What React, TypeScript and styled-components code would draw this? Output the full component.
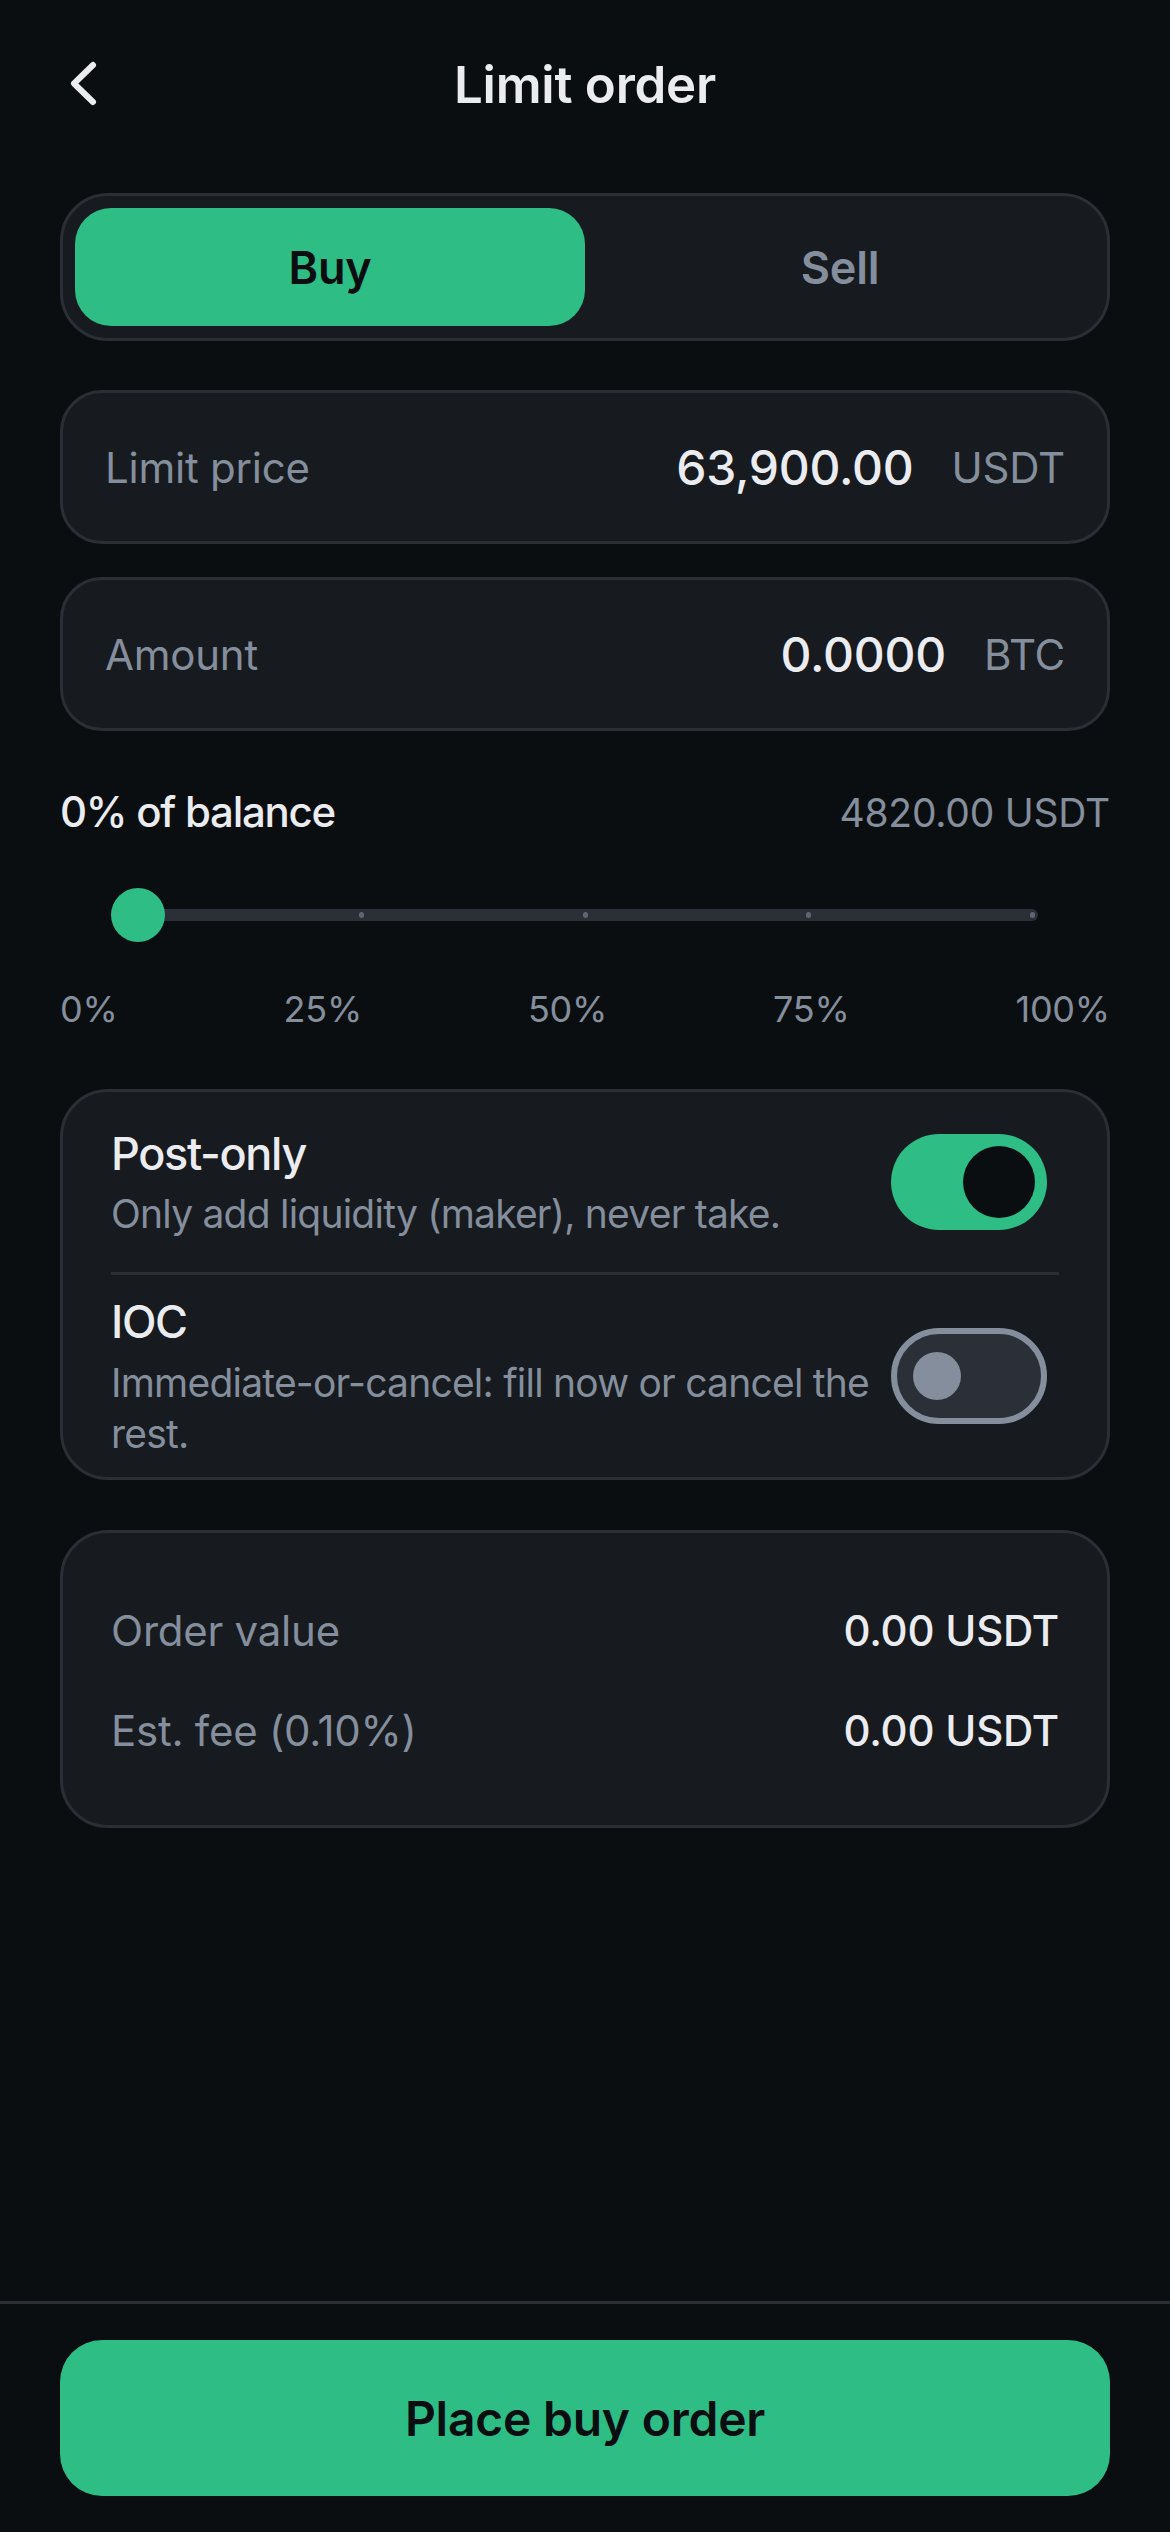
import React, { useState } from 'react';
import styled, { createGlobalStyle } from 'styled-components';

const GlobalStyle = createGlobalStyle`
  * {
    box-sizing: border-box;
  }
  html,
  body {
    margin: 0;
    padding: 0;
    background: #0b0e11;
  }
  body {
    font-family: Inter, 'Noto Sans', sans-serif;
    letter-spacing: -0.015em;
    color: #eaecef;
    -webkit-font-smoothing: antialiased;
  }
  button {
    letter-spacing: inherit;
  }
`;

const Page = styled.div`
  min-height: 100vh;
  display: flex;
  flex-direction: column;
  background: #0b0e11;
`;

const Header = styled.header`
  height: 168px;
  display: grid;
  grid-template-columns: 1fr auto 1fr;
  align-items: center;
  padding: 0 60px;
`;

const BackButton = styled.button`
  width: 48px;
  height: 48px;
  padding: 0;
  border: 0;
  background: none;
  color: #eaecef;
  display: flex;
  cursor: pointer;
`;

const Title = styled.h1`
  margin: 0;
  font-size: 51px;
  font-weight: 600;
  color: #eaecef;
`;

const Content = styled.main`
  flex: 1;
  display: flex;
  flex-direction: column;
  padding: 25px 60px 0;
`;

const Segmented = styled.div`
  display: grid;
  grid-template-columns: 1fr 1fr;
  padding: 12px;
  border: 3px solid #2a2f36;
  border-radius: 48px;
  background: #171a1f;
`;

const SegmentButton = styled.button<{ $active: boolean }>`
  height: 118px;
  border: 0;
  border-radius: 36px;
  font-family: inherit;
  font-size: 45px;
  font-weight: 600;
  cursor: pointer;
  background: ${(p) => (p.$active ? '#2ebd85' : 'transparent')};
  color: ${(p) => (p.$active ? '#0b0e11' : '#848e9c')};
`;

const Fields = styled.div`
  display: flex;
  flex-direction: column;
  gap: 33px;
  margin-top: 49px;
`;

const Field = styled.div`
  display: flex;
  align-items: center;
  height: 154px;
  padding: 0 42px;
  border: 3px solid #2a2f36;
  border-radius: 42px;
  background: #171a1f;
`;

const FieldLabel = styled.span`
  flex: 1;
  font-size: 42px;
  color: #848e9c;
`;

const FieldValue = styled.span`
  font-size: 48px;
  font-weight: 500;
  color: #eaecef;
`;

const FieldUnit = styled.span`
  margin-left: 38px;
  font-size: 42px;
  color: #848e9c;
`;

const BalanceRow = styled.div`
  display: flex;
  justify-content: space-between;
  align-items: baseline;
  margin-top: 54px;
  line-height: 1.3;
`;

const BalanceLabel = styled.span`
  font-size: 42px;
  font-weight: 500;
  letter-spacing: -0.03em;
  color: #eaecef;
`;

const BalanceValue = styled.span`
  font-size: 39px;
  color: #848e9c;
`;

const Slider = styled.div`
  position: relative;
  height: 66px;
  margin: 42px 72px 0;
`;

const Track = styled.div`
  position: absolute;
  left: 0;
  right: 0;
  top: 27px;
  height: 12px;
  border-radius: 6px;
  background: #2b3038;
`;

const Tick = styled.span`
  position: absolute;
  top: 3px;
  width: 5px;
  height: 6px;
  margin-left: -2.5px;
  border-radius: 3px;
  background: #5e6673;
`;

const Thumb = styled.span`
  position: absolute;
  top: 6px;
  width: 54px;
  height: 54px;
  margin-left: -27px;
  border-radius: 50%;
  background: #2ebd85;
`;

const Marks = styled.div`
  display: flex;
  justify-content: space-between;
  margin-top: 38px;
  font-size: 36px;
  line-height: 1.3;
  color: #848e9c;
`;

const Panel = styled.section<{ $gap: number }>`
  margin-top: ${(p) => p.$gap}px;
  border: 3px solid #2a2f36;
  border-radius: 48px;
  background: #171a1f;
`;

const Options = styled(Panel)`
  padding: 0 48px;
`;

const OptionRow = styled.div`
  display: flex;
  align-items: center;
  gap: 6px;
  min-height: 180px;
  padding: 18px 0;

  & + & {
    border-top: 3px solid #2a2f36;
  }
`;

const OptionText = styled.div`
  flex: 1;
  min-width: 0;
`;

const OptionTitle = styled.div`
  font-size: 45px;
  font-weight: 500;
  letter-spacing: -0.03em;
  line-height: 1.3;
  color: #eaecef;
`;

const OptionDesc = styled.div`
  margin-top: 6px;
  font-size: 39px;
  letter-spacing: -0.02em;
  line-height: 1.3;
  color: #848e9c;
`;

const Toggle = styled.button<{ $on: boolean }>`
  flex-shrink: 0;
  display: flex;
  align-items: center;
  justify-content: ${(p) => (p.$on ? 'flex-end' : 'flex-start')};
  width: 156px;
  height: 96px;
  margin-right: 12px;
  padding: ${(p) => (p.$on ? '0 12px' : '0 16px')};
  border: ${(p) => (p.$on ? '0' : '6px solid #848e9c')};
  border-radius: 48px;
  background: ${(p) => (p.$on ? '#2ebd85' : '#2b3038')};
  cursor: pointer;
`;

const Knob = styled.span<{ $on: boolean }>`
  width: ${(p) => (p.$on ? 72 : 48)}px;
  height: ${(p) => (p.$on ? 72 : 48)}px;
  border-radius: 50%;
  background: ${(p) => (p.$on ? '#0b0e11' : '#848e9c')};
`;

const Summary = styled(Panel)`
  padding: 48px 48px 44px;
`;

const SummaryRow = styled.div`
  display: flex;
  justify-content: space-between;
  align-items: center;
  padding: 24px 0;
  font-size: 42px;
  line-height: 52px;
`;

const SummaryLabel = styled.span`
  color: #848e9c;
`;

const SummaryValue = styled.span`
  font-weight: 500;
  color: #eaecef;
`;

const Footer = styled.footer`
  padding: 36px 60px;
  border-top: 3px solid #2a2f36;
`;

const SubmitButton = styled.button`
  width: 100%;
  height: 156px;
  border: 0;
  border-radius: 42px;
  background: #2ebd85;
  color: #0b0e11;
  font-family: inherit;
  font-size: 48px;
  font-weight: 600;
  cursor: pointer;
`;

const marks = [0, 25, 50, 75, 100];

const App = () => {
  const [side, setSide] = useState<'buy' | 'sell'>('buy');
  const [postOnly, setPostOnly] = useState(true);
  const [ioc, setIoc] = useState(false);
  const percent = 0;

  return (
    <Page>
      <GlobalStyle />
      <Header>
        <BackButton aria-label="Back">
          <svg width="48" height="48" viewBox="0 0 48 48" fill="none">
            <path
              d="M33 5 L14 23.5 L33 42"
              stroke="currentColor"
              strokeWidth="6"
              strokeLinecap="round"
              strokeLinejoin="round"
            />
          </svg>
        </BackButton>
        <Title>Limit order</Title>
        <span />
      </Header>

      <Content>
        <Segmented>
          <SegmentButton $active={side === 'buy'} onClick={() => setSide('buy')}>
            Buy
          </SegmentButton>
          <SegmentButton $active={side === 'sell'} onClick={() => setSide('sell')}>
            Sell
          </SegmentButton>
        </Segmented>

        <Fields>
          <Field>
            <FieldLabel>Limit price</FieldLabel>
            <FieldValue>63,900.00</FieldValue>
            <FieldUnit>USDT</FieldUnit>
          </Field>
          <Field>
            <FieldLabel>Amount</FieldLabel>
            <FieldValue>0.0000</FieldValue>
            <FieldUnit>BTC</FieldUnit>
          </Field>
        </Fields>

        <BalanceRow>
          <BalanceLabel>{percent}% of balance</BalanceLabel>
          <BalanceValue>4820.00 USDT</BalanceValue>
        </BalanceRow>

        <Slider>
          <Track>
            {marks.map((m) => (
              <Tick key={m} style={{ left: `calc(6px + (100% - 12px) * ${m / 100})` }} />
            ))}
          </Track>
          <Thumb style={{ left: `calc(6px + (100% - 12px) * ${percent / 100})` }} />
        </Slider>

        <Marks>
          {marks.map((m) => (
            <span key={m}>{m}%</span>
          ))}
        </Marks>

        <Options $gap={57}>
          <OptionRow>
            <OptionText>
              <OptionTitle>Post-only</OptionTitle>
              <OptionDesc>Only add liquidity (maker), never take.</OptionDesc>
            </OptionText>
            <Toggle $on={postOnly} onClick={() => setPostOnly(!postOnly)}>
              <Knob $on={postOnly} />
            </Toggle>
          </OptionRow>
          <OptionRow>
            <OptionText>
              <OptionTitle>IOC</OptionTitle>
              <OptionDesc>Immediate-or-cancel: fill now or cancel the rest.</OptionDesc>
            </OptionText>
            <Toggle $on={ioc} onClick={() => setIoc(!ioc)}>
              <Knob $on={ioc} />
            </Toggle>
          </OptionRow>
        </Options>

        <Summary $gap={50}>
          <SummaryRow>
            <SummaryLabel>Order value</SummaryLabel>
            <SummaryValue>0.00 USDT</SummaryValue>
          </SummaryRow>
          <SummaryRow>
            <SummaryLabel>Est. fee (0.10%)</SummaryLabel>
            <SummaryValue>0.00 USDT</SummaryValue>
          </SummaryRow>
        </Summary>
      </Content>

      <Footer>
        <SubmitButton>Place {side} order</SubmitButton>
      </Footer>
    </Page>
  );
};

export default App;
